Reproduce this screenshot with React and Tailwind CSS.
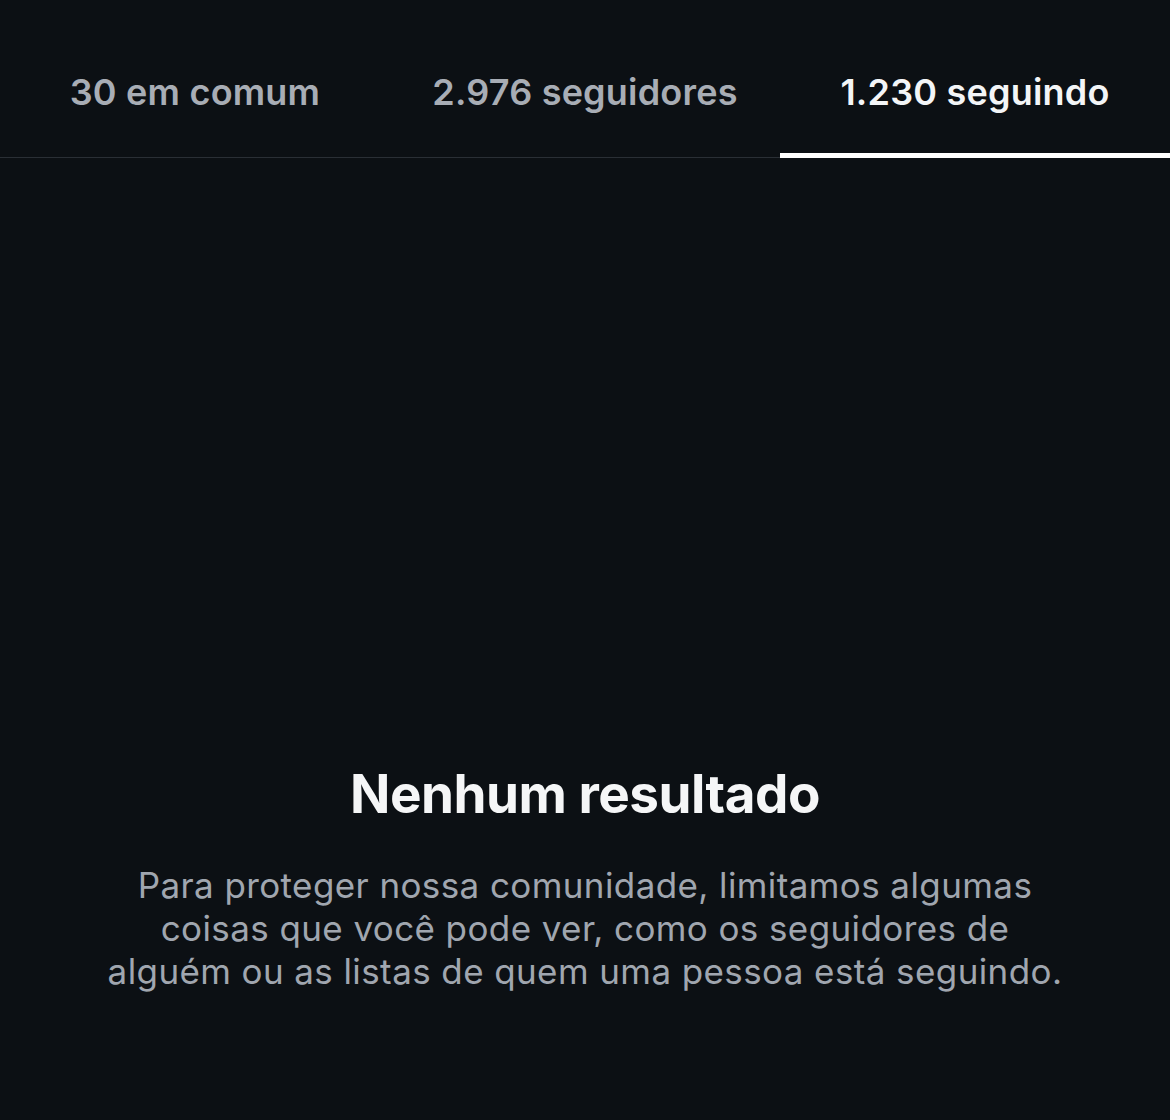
const tabs = [
  { label: '30 em comum', active: false },
  { label: '2.976 seguidores', active: false },
  { label: '1.230 seguindo', active: true },
];

const lines = [
  'Para proteger nossa comunidade, limitamos algumas',
  'coisas que você pode ver, como os seguidores de',
  'alguém ou as listas de quem uma pessoa está seguindo.',
];

export default function App() {
  return (
    <div
      className="w-[1170px] h-[1120px] bg-[#0c1014] flex flex-col"
      style={{ fontFamily: 'Inter, "Noto Sans", sans-serif' }}
    >
      {/* Tabs */}
      <div className="flex border-b border-[#2a2f35] h-[158px]">
        {tabs.map(({ label, active }) => (
          <div key={label} className="flex-1 relative flex items-start justify-center pt-[70px]">
            <span
              className={`text-[36px] leading-[44px] font-semibold tracking-[0.2px] ${
                active ? 'text-[#f3f5f7]' : 'text-[#a8adb5]'
              }`}
            >
              {label}
            </span>
            {active && (
              <div className="absolute left-0 right-0 bottom-[-1px] h-[5px] bg-white" />
            )}
          </div>
        ))}
      </div>

      {/* Empty state */}
      <div className="flex flex-col items-center pt-[604px]">
        <h2 className="text-[53px] font-bold text-[#f5f6f7] leading-[64px] tracking-[-0.5px]">
          Nenhum resultado
        </h2>
        <p className="mt-[38px] text-center text-[35px] leading-[43px] text-[#a0a6af] tracking-[0.4px]">
          {lines.map((l) => (
            <span key={l} className="block whitespace-nowrap">{l}</span>
          ))}
        </p>
      </div>
    </div>
  );
}
